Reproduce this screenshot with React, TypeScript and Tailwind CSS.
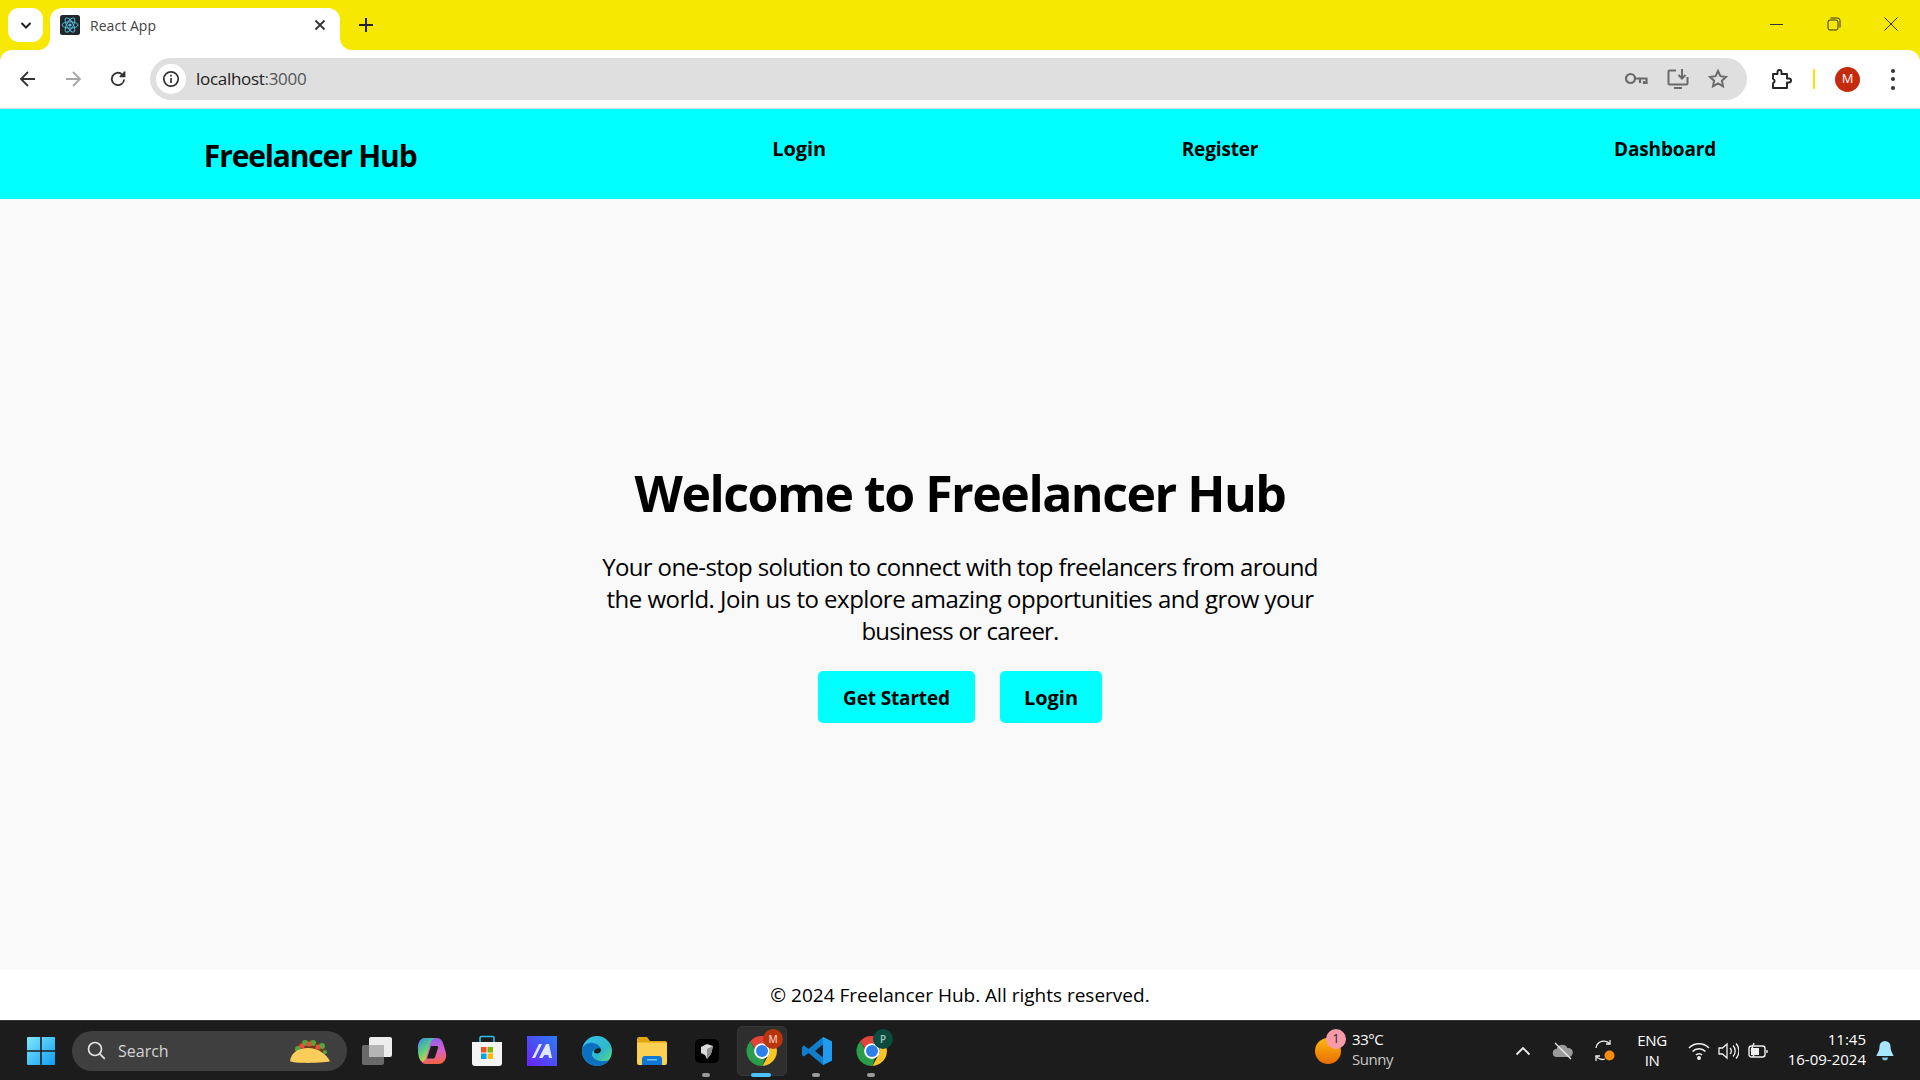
import React from "react";

const ui = { fontFamily: '"Open Sans", "Noto Sans", sans-serif' };

function ChromeIcon({ size = 30 }: { size?: number }) {
  return (
    <svg width={size} height={size} viewBox="0 0 48 48">
      <path d="M24 4a20 20 0 0 1 17.3 10H24a10 10 0 0 0-9.4 6.6L8.2 10.9A20 20 0 0 1 24 4z" fill="#e2433a" />
      <path d="M41.3 14A20 20 0 0 1 24.6 44l8.2-14.9A10 10 0 0 0 33 18z" fill="#fbc527" />
      <path d="M8.2 10.9l8.6 14.9A10 10 0 0 0 28 33.4L24.6 44A20 20 0 0 1 8.2 10.9z" fill="#2a9c4a" />
      <circle cx="24" cy="24" r="10.5" fill="#fff" />
      <circle cx="24" cy="24" r="8" fill="#2f7fe8" />
    </svg>
  );
}

function App() {
  return (
    <div className="w-[1920px] h-[1080px] flex flex-col overflow-hidden text-black bg-[#f9f9f9]" style={ui}>
      {/* Tab strip */}
      <div className="h-[50px] shrink-0 bg-[#f6e800] flex items-start relative">
        <div className="ml-2 mt-2 w-[35px] h-[34px] bg-white rounded-[11px] flex items-center justify-center">
          <svg width="14" height="14" viewBox="0 0 14 14" fill="none" stroke="#222" strokeWidth="2"><path d="M2.5 5l4.500 4.500L11.500 5" /></svg>
        </div>
        <div className="relative ml-[7px] mt-2 w-[290px] h-[42px] bg-white rounded-t-[12px] flex items-center pl-[10px] pr-[14px]">
          <svg width="20" height="20" viewBox="0 0 20 20" className="shrink-0 mb-[8px]">
            <rect width="20" height="20" rx="2.500" fill="#20272c" />
            <g fill="none" stroke="#5cc4e6" strokeWidth="0.9">
              <ellipse cx="10" cy="10" rx="8" ry="3.200" />
              <ellipse cx="10" cy="10" rx="8" ry="3.200" transform="rotate(60 10 10)" />
              <ellipse cx="10" cy="10" rx="8" ry="3.200" transform="rotate(120 10 10)" />
            </g>
            <circle cx="10" cy="10" r="1.600" fill="#5cc4e6" />
          </svg>
          <span className="ml-[10px] text-[14px] text-[#444] mb-[8px] tracking-[0.05px]">React App</span>
          <svg width="12" height="12" viewBox="0 0 12 12" className="ml-auto mb-[8px]" fill="none" stroke="#333" strokeWidth="1.800"><path d="M1.500 1.500l9 9M10.500 1.500l-9 9" /></svg>
          <svg width="12" height="12" viewBox="0 0 12 12" className="absolute left-[-12px] bottom-0"><path d="M12 0v12H0a12 12 0 0 0 12-12z" fill="#fff" /></svg>
          <svg width="12" height="12" viewBox="0 0 12 12" className="absolute right-[-12px] bottom-0"><path d="M0 0v12h12A12 12 0 0 1 0 0z" fill="#fff" /></svg>
        </div>
        <svg width="14" height="14" viewBox="0 0 14 14" className="ml-[19px] mt-[18px]" fill="none" stroke="#222" strokeWidth="2"><path d="M7 0v14M0 7h14" /></svg>
        <div className="ml-auto flex items-center mt-[17px] pr-[22px] gap-[43px]">
          <svg width="14" height="14" viewBox="0 0 14 14" stroke="#333" fill="none"><path d="M0 7.500h13" /></svg>
          <svg width="14" height="14" viewBox="0 0 14 14" stroke="#333" fill="none"><rect x="1" y="3" width="10" height="10" rx="2" /><path d="M3.500 1h7a2.500 2.500 0 0 1 2.500 2.500v7" /></svg>
          <svg width="14" height="14" viewBox="0 0 14 14" stroke="#333" fill="none"><path d="M.5.5l13 13M13.500.5l-13 13" /></svg>
        </div>
      </div>

      {/* Toolbar */}
      <div className="h-[59px] shrink-0 bg-[#f6e800]">
        <div className="h-full bg-white rounded-t-[12px] border-b border-[#d3e3e3] flex items-center">
          <div className="flex items-center pl-[19px] gap-[27px] mb-[1px]">
            <svg width="18" height="18" viewBox="0 0 18 18" fill="none" stroke="#333" strokeWidth="1.800"><path d="M16 9H2M9 2L2 9l7 7" /></svg>
            <svg width="18" height="18" viewBox="0 0 18 18" fill="none" stroke="#a6a6a6" strokeWidth="1.800"><path d="M2 9h14M9 2l7 7-7 7" /></svg>
            <svg width="18" height="18" viewBox="0 0 18 18" fill="none" stroke="#333" strokeWidth="1.800"><path d="M15.200 9.500A6.200 6.200 0 1 1 13 4.200" /><path d="M15.500 1.500v4.800h-4.800" fill="#333" /></svg>
          </div>
          <div className="ml-[23px] w-[1597px] h-[42px] rounded-full bg-[#dfdfdf] flex items-center pl-[6px] pr-[19px] mb-[1px]">
            <div className="w-[30px] h-[30px] rounded-full bg-white flex items-center justify-center">
              <svg width="18" height="18" viewBox="0 0 18 18" fill="none" stroke="#333" strokeWidth="1.700"><circle cx="9" cy="9" r="7.200" /><path d="M9 8v5M9 4.800v1.800" /></svg>
            </div>
            <span className="ml-[10px] text-[17px] text-[#222] tracking-[-0.3px]">localhost<span className="text-[#555]">:3000</span></span>
            <div className="ml-auto flex items-center gap-[19px]">
              <svg width="24" height="16" viewBox="0 0 24 16" fill="none" stroke="#6a6a6a" strokeWidth="2.200"><circle cx="6.500" cy="7.500" r="4.500" /><path d="M11 7.500h11.500v4.500h-2.500v-2M16 8v4" /></svg>
              <svg width="22" height="22" viewBox="0 0 22 22" fill="none" stroke="#6a6a6a" strokeWidth="2"><path d="M9 2.500H2.500a1 1 0 0 0-1 1v12a1 1 0 0 0 1 1h17a1 1 0 0 0 1-1V9" /><path d="M7 20h8M15 1v9M11.500 7l3.500 3.500L18.500 7" /></svg>
              <svg width="20" height="20" viewBox="0 0 20 20" fill="none" stroke="#6a6a6a" strokeWidth="2"><path d="M10 2l2.400 5.200 5.600.7-4.100 3.800 1.100 5.600-5-2.800-5 2.800 1.100-5.600L2 7.900l5.600-.7z" /></svg>
            </div>
          </div>
          <svg width="22" height="22" viewBox="0 0 22 22" className="ml-[23px]" fill="none" stroke="#222" strokeWidth="1.900"><path d="M3 6h4.500V4a2 2 0 0 1 4 0v2H17v4.500h2a2 2 0 0 1 0 4h-2V20H3v-4.800a2.300 2.300 0 0 0 0-4.400z" strokeLinejoin="round" /></svg>
          <div className="ml-[21px] w-[2px] h-[20px] bg-[#f6e800]" />
          <div className="ml-[20px] w-[25px] h-[25px] rounded-full bg-[#c42b0c] text-white text-[13px] flex items-center justify-center">M</div>
          <div className="ml-[31px] flex flex-col gap-[4.500px]">
            <div className="w-[4px] h-[4px] rounded-full bg-[#333]" />
            <div className="w-[4px] h-[4px] rounded-full bg-[#333]" />
            <div className="w-[4px] h-[4px] rounded-full bg-[#333]" />
          </div>
        </div>
      </div>

      {/* Site nav */}
      <nav className="h-[90px] shrink-0 bg-[#00ffff] flex justify-around items-start px-[26px]">
        <span className="mt-[27px] text-[30px] leading-[40px] font-bold tracking-[-1.15px] whitespace-nowrap">Freelancer Hub</span>
        <span className="mt-[19px] text-[20px] leading-[42px] font-bold tracking-[-0.1px]">Login</span>
        <span className="mt-[19px] text-[19px] leading-[42px] font-bold tracking-[-0.15px]">Register</span>
        <span className="mt-[19px] text-[19px] leading-[42px] font-bold tracking-[-0.15px]">Dashboard</span>
      </nav>

      {/* Hero */}
      <main className="flex-1 flex flex-col items-center pt-[260px]">
        <h1 className="text-[50px] leading-[68px] font-bold tracking-[-1.5px] whitespace-nowrap">Welcome to Freelancer Hub</h1>
        <p className="mt-[24px] w-[760px] text-[24px] leading-[32px] text-center">
          <span className="block tracking-[-0.63px]">Your one-stop solution to connect with top freelancers from around</span>
          <span className="block tracking-[-0.5px]">the world. Join us to explore amazing opportunities and grow your</span>
          <span className="block tracking-[-0.8px]">business or career.</span>
        </p>
        <div className="mt-[24px] flex gap-[25px]">
          <button className="w-[157px] h-[52px] pt-[2px] rounded-[5px] bg-[#00ffff] text-[19px] font-bold tracking-[-0.15px]">Get Started</button>
          <button className="w-[102px] h-[52px] pt-[2px] rounded-[5px] bg-[#00ffff] text-[20px] font-bold">Login</button>
        </div>
      </main>

      {/* Footer */}
      <footer className="h-[51px] pt-[2px] shrink-0 bg-white flex items-center justify-center text-[19px] tracking-[0px]">© 2024 Freelancer Hub. All rights reserved.</footer>

      {/* Taskbar */}
      <div className="h-[60px] shrink-0 bg-[#1c1c1c] border-t border-[#333] flex items-center text-white">
        <svg width="30" height="30" viewBox="0 0 30 30" className="ml-[26px]">
          <defs><linearGradient id="win" x1="0" y1="0" x2="1" y2="1"><stop offset="0" stopColor="#7fe9ff" /><stop offset="1" stopColor="#0f9bf5" /></linearGradient></defs>
          <path d="M1 2a1 1 0 0 1 1-1h12.200v13.200H1zM15.800 1H28a1 1 0 0 1 1 1v12.200H15.800zM1 15.800h13.200V29H2a1 1 0 0 1-1-1zM15.800 15.800H29V28a1 1 0 0 1-1 1H15.800z" fill="url(#win)" />
        </svg>
        <div className="ml-[16px] w-[275px] h-[40px] rounded-full bg-[#3f3f3f] flex items-center pl-[15px] pr-[16px]">
          <svg width="19" height="19" viewBox="0 0 19 19" fill="none" stroke="#e4e4e4" strokeWidth="1.700"><circle cx="8" cy="8" r="6.500" /><path d="M12.800 12.800l5 5" /></svg>
          <span className="ml-[12px] text-[16px] text-[#d4d4d4]">Search</span>
          <svg width="42" height="26" viewBox="0 0 42 26" className="ml-auto">
            <path d="M4 17C5 7 14 1 22 2c8 1 14 7 16 14z" fill="#6b3c1c" />
            <circle cx="9" cy="11" r="3" fill="#4fa83d" /><circle cx="16" cy="5" r="3" fill="#4fa83d" /><circle cx="24" cy="5" r="3" fill="#4fa83d" /><circle cx="33" cy="8" r="3" fill="#4fa83d" />
            <circle cx="13" cy="8" r="2.600" fill="#e8503a" /><circle cx="20" cy="6" r="2.600" fill="#e8503a" /><circle cx="29" cy="9" r="2.600" fill="#e8503a" />
            <circle cx="6" cy="16" r="2.500" fill="#3c2412" /><circle cx="36" cy="14" r="2" fill="#4fa83d" />
            <path d="M1 23C2 15 9 10 19 10c10 0 18 6 22 13-1 2-38 3-40 0z" fill="#fbcd5a" />
          </svg>
        </div>

        <div className="ml-[2px] flex items-center">
          <div className="w-[55px] h-[59px] flex items-center justify-center">
            <svg width="30" height="28" viewBox="0 0 30 28"><rect x="0" y="8" width="22" height="20" rx="2" fill="#6a6a6a" /><rect x="7" y="0" width="23" height="20" rx="2" fill="#ededed" /><rect x="7" y="8" width="15" height="12" fill="#b5b5b5" /></svg>
          </div>
          <div className="w-[55px] h-[59px] flex items-center justify-center">
            <svg width="30" height="28" viewBox="0 0 30 28">
              <defs>
                <linearGradient id="cp1" x1="0" y1="0" x2="0.6" y2="1"><stop offset="0" stopColor="#2a8fe8" /><stop offset="0.55" stopColor="#5fd17a" /><stop offset="1" stopColor="#f5d13b" /></linearGradient>
                <linearGradient id="cp2" x1="0.4" y1="0" x2="0.6" y2="1"><stop offset="0" stopColor="#8a5ff0" /><stop offset="0.55" stopColor="#d95fc4" /><stop offset="1" stopColor="#f4643f" /></linearGradient>
              </defs>
              <path d="M8 1h12c3 0 5 2 6 5l3 10c1 6-2 11-8 11H9c-3 0-5-2-6-5L1 13C0 7 3 1 8 1z" fill="url(#cp2)" />
              <path d="M8 1h11c-3 0-5 3-6 6L9 21c-1 3-3 4-5 3-2-2-3-6-3-11C1 7 3 1 8 1z" fill="url(#cp1)" />
              <path d="M14 9h6c1 0 1.500 1 1 2l-3 9c-.5 1-1 1.500-2 1.500h-6z" fill="#1c1c1c" />
            </svg>
          </div>
          <div className="w-[55px] h-[59px] flex items-center justify-center">
            <svg width="32" height="32" viewBox="0 0 32 32">
              <path d="M9 7V3a1.500 1.500 0 0 1 1.500-1.500h11A1.500 1.500 0 0 1 23 3v4" fill="none" stroke="#2fc0f0" strokeWidth="1.600" />
              <path d="M1 7h30v21a3 3 0 0 1-3 3H4a3 3 0 0 1-3-3z" fill="#f4f4f4" />
              <rect x="10" y="12" width="5.500" height="5.500" fill="#f25022" /><rect x="16.500" y="12" width="5.500" height="5.500" fill="#7fba00" />
              <rect x="10" y="18.500" width="5.500" height="5.500" fill="#00a4ef" /><rect x="16.500" y="18.500" width="5.500" height="5.500" fill="#ffb900" />
            </svg>
          </div>
          <div className="w-[55px] h-[59px] flex items-center justify-center">
            <svg width="30" height="30" viewBox="0 0 30 30">
              <defs><linearGradient id="ma" x1="0" y1="1" x2="1" y2="0"><stop offset="0" stopColor="#6a22f5" /><stop offset="1" stopColor="#2c7cf6" /></linearGradient></defs>
              <rect width="30" height="30" fill="url(#ma)" />
              <path d="M5 22L12 8h3L8 22zM12 22L19 8h3l3 14h-3l-.6-3h-4L15.500 22z" fill="#dfe7ff" />
            </svg>
          </div>
          <div className="w-[55px] h-[59px] flex items-center justify-center">
            <svg width="30" height="30" viewBox="0 0 30 30">
              <defs>
                <linearGradient id="ed1" x1="0" y1="0" x2="1" y2="1"><stop offset="0" stopColor="#35c1f1" /><stop offset="0.6" stopColor="#2fb9c8" /><stop offset="1" stopColor="#66e36b" /></linearGradient>
              </defs>
              <circle cx="15" cy="15" r="15" fill="url(#ed1)" />
              <path d="M0 15c0-5 5-9 11-8 5 1 8 4 8 7-3-2-8-1-9 3-1 5 5 9 13 8 1 0 3-.6 4-1-3 4-7 6-12 6-8 0-15-7-15-15z" fill="#0c6fbf" />
              <path d="M19 14c0 2-2 3.500-4 3.500s-3-1-3-2c0-3 7-5 7-1.500z" fill="#1c1c1c" />
            </svg>
          </div>
          <div className="w-[55px] h-[59px] flex items-center justify-center">
            <svg width="30" height="28" viewBox="0 0 30 28">
              <path d="M0 2a2 2 0 0 1 2-2h8l3 4h15a2 2 0 0 1 2 2v3H0z" fill="#e0a60c" />
              <path d="M0 5.500h30V26a2 2 0 0 1-2 2H2a2 2 0 0 1-2-2z" fill="#fcd052" />
              <path d="M5 28v-6a3 3 0 0 1 3-3h14a3 3 0 0 1 3 3v6z" fill="#0f78d4" />
              <rect x="10" y="22" width="10" height="1.500" fill="#7ac3f5" />
            </svg>
          </div>
          <div className="relative w-[55px] h-[59px] flex items-center justify-center">
            <svg width="24" height="24" viewBox="0 0 24 24"><rect width="24" height="24" rx="5" fill="#000" /><path d="M6 8l6-3 6 2-2 8-4 5-2-4-4-2z" fill="#d9d9d9" /><path d="M12 10l6-3-2 8-4 5z" fill="#8c8c8c" /></svg>
            <div className="absolute bottom-[3px] left-[23px] w-[8px] h-[4px] rounded-full bg-[#9a9a9a]" />
          </div>
          <div className="relative w-[55px] h-[59px] flex items-center justify-center">
            <div className="absolute left-[3px] top-[5px] w-[50px] h-[50px] rounded-[5px] bg-[#2e2e2e] border border-[#363636]" />
            <div className="relative"><ChromeIcon size={36} /></div>
            <div className="absolute top-[8px] left-[29px] w-[20px] h-[20px] rounded-full bg-[#b9350f] text-[#f3c4b0] text-[10px] font-semibold flex items-center justify-center">M</div>
            <div className="absolute bottom-[3px] left-[17px] w-[20px] h-[4px] rounded-full bg-[#4cc2ff]" />
          </div>
          <div className="relative w-[55px] h-[59px] flex items-center justify-center">
            <svg width="30" height="30" viewBox="0 0 30 30">
              <path d="M21 1l9 4.500v19L21 29 6.500 17 2 20.500 0 19v-8l2-1.500L6.500 13z" fill="#0f7fcc" />
              <path d="M21 1l9 4.500v19L21 29z" fill="#1f9cf0" />
              <path d="M21 8.500v13L13 15z" fill="#1c1c1c" />
            </svg>
            <div className="absolute bottom-[3px] left-[23px] w-[8px] h-[4px] rounded-full bg-[#9a9a9a]" />
          </div>
          <div className="relative w-[55px] h-[59px] flex items-center justify-center">
            <ChromeIcon size={36} />
            <div className="absolute top-[8px] left-[29px] w-[20px] h-[20px] rounded-full bg-[#0c4b3e] text-[#9fc8bb] text-[10px] font-semibold flex items-center justify-center">P</div>
            <div className="absolute bottom-[3px] left-[23px] w-[8px] h-[4px] rounded-full bg-[#9a9a9a]" />
          </div>
        </div>

        {/* Tray */}
        <div className="ml-auto flex items-center">
          <div className="relative w-[26px] h-[26px] mt-[1px]">
            <div className="w-[26px] h-[26px] rounded-full bg-gradient-to-b from-[#fbb70f] to-[#e86c00]" />
            <div className="absolute -top-[9px] left-[11px] w-[20px] h-[20px] rounded-full bg-[#f99aa8] text-[#222] text-[12px] flex items-center justify-center">1</div>
          </div>
          <div className="ml-[11px] mb-[3px] w-[163px] flex flex-col text-[15px] leading-[20px] tracking-[-0.45px]">
            <span>33°C</span>
            <span className="text-[#c8c8c8]">Sunny</span>
          </div>
          <svg width="16" height="10" viewBox="0 0 16 10" fill="none" stroke="#f0f0f0" strokeWidth="1.800"><path d="M1.500 8.500L8 2l6.500 6.500" /></svg>
          <svg width="22" height="18" viewBox="0 0 22 18" className="ml-[21px]"><path d="M5 15a4 4 0 0 1-.5-8 6 6 0 0 1 11-1 4.500 4.500 0 0 1 1.500 9z" fill="#9a9a9a" /><path d="M3 1l16 16" stroke="#eee" strokeWidth="1.300" /></svg>
          <svg width="22" height="24" viewBox="0 0 22 24" className="ml-[19px]" fill="none" stroke="#eee" strokeWidth="1.300"><path d="M3 9a8 8 0 0 1 14-4" /><path d="M17 1v4h-4" /><path d="M12 20a8 8 0 0 1-9-3" /><path d="M3 22v-5h4" /><circle cx="16.500" cy="16.500" r="5" fill="#f78d0f" stroke="none" /></svg>
          <div className="ml-[17px] mb-[2px] w-[40px] flex flex-col items-center text-[15px] leading-[20px] tracking-[-0.4px]"><span>ENG</span><span>IN</span></div>
          <svg width="22" height="18" viewBox="0 0 22 18" className="ml-[16px]" fill="none" stroke="#f0f0f0" strokeWidth="1.500"><path d="M1 6a14 14 0 0 1 20 0M4.500 9.500a9 9 0 0 1 13 0M8 13a4 4 0 0 1 6 0" /><circle cx="11" cy="16" r="1.200" fill="#f0f0f0" /></svg>
          <svg width="21" height="18" viewBox="0 0 21 18" className="ml-[8px]" fill="none" stroke="#f0f0f0" strokeWidth="1.300"><path d="M1 6h3.500L9 2v14l-4.500-4H1z" /><path d="M12 6a4 4 0 0 1 0 6M15 3.500a8 8 0 0 1 0 11M18 1.500a11 11 0 0 1 0 15" /></svg>
          <svg width="21" height="18" viewBox="0 0 21 18" className="ml-[9px]" fill="none" stroke="#f0f0f0" strokeWidth="1.400"><rect x="1" y="4" width="16" height="11" rx="2.500" /><path d="M19 8v3" /><path d="M6 1L3.500 8h4L5 15" fill="#1c1c1c" /><rect x="3" y="6" width="8" height="7" fill="#f0f0f0" stroke="none" /></svg>
          <div className="ml-[13px] mb-[3px] w-[84px] flex flex-col items-end text-[15px] leading-[20px] tracking-[0px] whitespace-nowrap"><span>11:45</span><span>16-09-2024</span></div>
          <svg width="18" height="22" viewBox="0 0 18 22" className="ml-[10px] mr-[26px]"><path d="M9 1a5.500 5.500 0 0 1 5.500 5.500c0 5 3 8 3 9.500H.5c0-1.500 3-4.500 3-9.500A5.500 5.500 0 0 1 9 1z" fill="#a5e6fb" /><path d="M6 17.500h6c0 2-1.500 3-3 3s-3-1-3-3z" fill="#7fc7e0" /></svg>
        </div>
      </div>
    </div>
  );
}

export default App;
